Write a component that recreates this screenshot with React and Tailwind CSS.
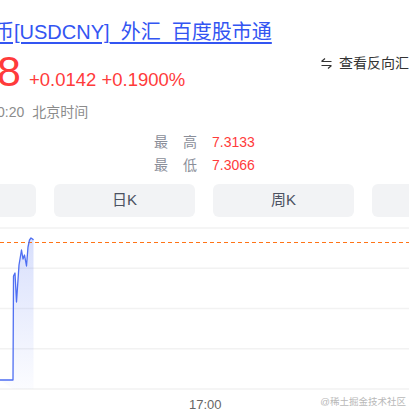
import React from 'react';

const font = 'font-["Liberation_Sans","Noto_Sans_CJK_SC",sans-serif]';

const tabs = ['分时', '日K', '周K', '月K'];

// price line, svg coords (chart top = page y 226)
const linePts = [
  [0, 154], [13, 154], [13.5, 50], [15, 47], [16.5, 76], [19, 39], [21.5, 24],
  [23, 33], [24.5, 29], [26.5, 40], [28, 21], [29.5, 14], [31, 12], [32.5, 13], [33.5, 14],
];

const PriceChart = () => {
  const line = linePts.map((p, i) => `${i ? 'L' : 'M'}${p[0]} ${p[1]}`).join(' ');
  const area = `${line} L33.5 163 L13 163 Z`;
  return (
    <svg width="409" height="166" className="block" viewBox="0 0 409 166">
      <defs>
        <linearGradient id="fillGrad" x1="0" y1="0" x2="0" y2="1">
          <stop offset="0%" stopColor="#4e6ef2" stopOpacity="0.22" />
          <stop offset="100%" stopColor="#4e6ef2" stopOpacity="0.02" />
        </linearGradient>
      </defs>
      {[2, 42.25, 82.5, 122.75, 163].map((y) => (
        <line key={y} x1="0" x2="409" y1={y} y2={y} stroke="#f2f2f2" strokeWidth="1.5" />
      ))}
      <path d={area} fill="url(#fillGrad)" />
      <line x1="0" x2="409" y1="16.5" y2="16.5" stroke="#ff7417" strokeWidth="1.2" strokeDasharray="4 3" />
      <path d={line} fill="none" stroke="#4e6ef2" strokeWidth="1.3" strokeLinejoin="round" />
    </svg>
  );
};

export default function App() {
  return (
    <div className={`relative w-[409px] h-[409px] overflow-hidden bg-white ${font}`}>
      {/* title */}
      <div className="pt-[19px] ml-[-86px] whitespace-nowrap text-[20px] leading-[26px] text-[#3355f2] underline underline-offset-[3px]">
        美元人民币[USDCNY]_外汇_百度股市通
      </div>

      {/* price row */}
      <div className="mt-[6px] flex w-[423px] items-start">
        <div className="flex items-baseline whitespace-nowrap text-[#ff3b3b]">
          <span className="text-[43px] leading-[40px] ml-[-3px]">8</span>
          <span className="ml-[8px] text-[18.5px]">+0.0142 +0.1900%</span>
        </div>
        <div className="ml-auto mt-[3px] flex items-center whitespace-nowrap text-[14px] leading-[18px] text-[#333]">
          <svg width="11" height="12" viewBox="0 0 11 12" className="mr-[7px]">
            <path d="M0.5 4.5h10M0.5 4.5l3.5-3" stroke="#333" strokeWidth="1.2" fill="none" />
            <path d="M0.5 8.5h10M10.5 8.5l-3.5 3" stroke="#333" strokeWidth="1.2" fill="none" />
          </svg>
          查看反向汇率
        </div>
      </div>

      {/* time */}
      <div className="mt-[9px] ml-[-3px] whitespace-nowrap text-[14px] leading-[18px] text-[#8c8c8c]">
        0:20<span className="ml-[8px]">北京时间</span>
      </div>

      {/* high / low */}
      <div className="mt-[12px] ml-[154px] flex flex-col gap-[5px] text-[14px] leading-[18px]">
        <div className="flex">
          <span className="flex gap-[15px] text-[#8a8e99]"><span>最</span><span>高</span></span>
          <span className="ml-[15px] text-[#ff3b3b]">7.3133</span>
        </div>
        <div className="flex">
          <span className="flex gap-[15px] text-[#8a8e99]"><span>最</span><span>低</span></span>
          <span className="ml-[15px] text-[#ff3b3b]">7.3066</span>
        </div>
      </div>

      {/* period tabs */}
      <div className="mt-[10px] ml-[-105px] flex gap-[18px]">
        {tabs.map((t) => (
          <div
            key={t}
            className="flex h-[33px] w-[141px] shrink-0 items-center justify-center rounded-[6px] bg-[#f2f3f5] text-[15px] text-[#4b5161]"
          >
            {t}
          </div>
        ))}
      </div>

      {/* chart */}
      <div className="mt-[9px]">
        <PriceChart />
      </div>
      <div className="mt-[5px] ml-[189px] text-[13px] leading-[16px] text-[#666]">17:00</div>

      <div className="absolute right-[3px] bottom-[2px] whitespace-nowrap text-[9.5px] leading-[11px] text-[#b8b8b8]">
        @稀土掘金技术社区
      </div>
    </div>
  );
}
